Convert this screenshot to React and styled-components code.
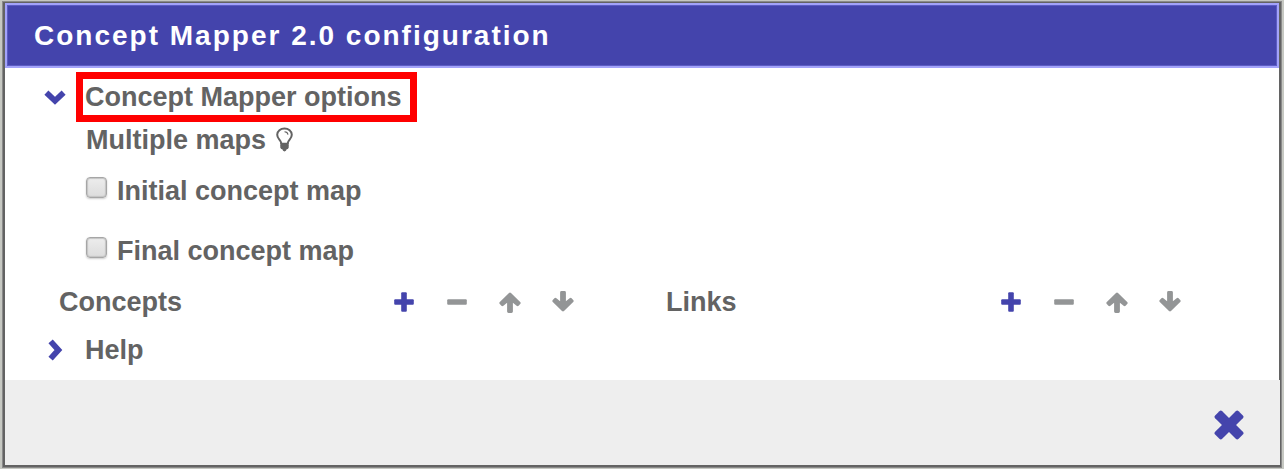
import React, { useState } from 'react';
import styled, { createGlobalStyle } from 'styled-components';

const GlobalStyle = createGlobalStyle`
  * {
    box-sizing: border-box;
  }
  body {
    margin: 0;
    padding: 1px 2px;
    background: #c6c8c2;
    color: #636363;
    font-family: "Liberation Sans", Arial, sans-serif;
    font-size: 27px;
    font-weight: bold;
    line-height: 36px;
  }
  button {
    display: flex;
    align-items: center;
    justify-content: center;
    padding: 0;
    border: none;
    background: none;
    color: inherit;
    font: inherit;
    cursor: pointer;
  }
  svg {
    display: block;
    flex: none;
  }
`;

const Frame = styled.main`
  border: 1px solid #8a8a8a;
`;

const Dialog = styled.section`
  border: 2px solid #636363;
  border-top-width: 1px;
  background: #fff;
`;

const TitleBar = styled.header`
  display: flex;
  align-items: center;
  height: 65px;
  padding: 0 27px;
  border: 2px solid #a3a3fa;
  background: #4444ac;
  box-shadow: inset 0 0 0 1px #5c5cc4;
  color: #fff;
`;

const Title = styled.h1`
  margin: 0;
  font-size: 28px;
  letter-spacing: 2px;
`;

const Content = styled.div`
  padding: 4px 0 3px;
`;

const SectionToggle = styled.button`
  height: ${props => props.$height};
`;

const Arrow = styled.span`
  display: flex;
  justify-content: center;
  width: 28px;
  margin: 0 7px 0 36px;
  color: #4444ac;
`;

const SectionName = styled.span`
  height: ${props => props.$marked ? '50px' : 'auto'};
  padding: 0 8px 0 2px;
  border: 7px solid ${props => props.$marked ? '#f00' : 'transparent'};
`;

const Options = styled.fieldset`
  margin: 0;
  padding: 0 0 0 81px;
  border: none;
`;

const OptionsLegend = styled.legend`
  display: flex;
  align-items: center;
  gap: 10px;
  height: 39px;
  padding: 0 0 4px;
`;

const OptionLabel = styled.label`
  display: flex;
  align-items: center;
  gap: 10px;
  width: fit-content;
  height: 60px;
`;

const Checkbox = styled.input`
  appearance: none;
  width: 21px;
  height: 21px;
  margin: 0 0 8px;
  border: 1px solid #a6a6a6;
  border-radius: 4px;
  background: linear-gradient(#ededed, #dcdcdc);
  box-shadow: 0 1px 2px rgba(0, 0, 0, 0.2), inset 0 0 1px 1px #c4c4c4;
  &:checked {
    background: #4444ac;
  }
`;

const Lists = styled.div`
  display: grid;
  grid-template-columns: 1fr 1fr;
  padding: 0 6px 0 54px;
`;

const ListHeader = styled.div`
  display: flex;
  align-items: center;
  justify-content: space-between;
  height: 42px;
  padding-right: 77px;
`;

const ListName = styled.h2`
  margin: 0;
  font-size: 27px;
`;

const Tools = styled.div`
  display: flex;
`;

const ToolButton = styled.button`
  width: 53px;
  height: 42px;
  color: ${props => props.$active ? '#4444ac' : '#939596'};
`;

const Footer = styled.footer`
  display: flex;
  justify-content: flex-end;
  align-items: center;
  position: relative;
  height: 85px;
  margin-right: -1px;
  padding: 5px 36px 0;
  background: #eee;
`;

const CloseButton = styled.button`
  width: 30px;
  height: 30px;
  color: #4444ac;
`;

const Icon = ({ width = 22, height = 22, children }) => (
  <svg width={width} height={height} viewBox={`0 0 ${width} ${height}`} fill="currentColor" aria-hidden="true">
    {children}
  </svg>
);

const ChevronDown = () => (
  <Icon width={22} height={15}>
    <path d="M2.4 2.6 11 10.8 19.6 2.6" fill="none" stroke="currentColor" strokeWidth="5.8" />
  </Icon>
);

const ChevronRight = () => (
  <Icon width={15} height={22}>
    <path d="M2.6 2.4 10.4 11 2.6 19.6" fill="none" stroke="currentColor" strokeWidth="5.8" />
  </Icon>
);

const Plus = () => (
  <Icon>
    <rect x="1.2" y="8.2" width="19.6" height="5.6" rx="1" />
    <rect x="8.2" y="1.2" width="5.6" height="19.6" rx="1" />
  </Icon>
);

const Minus = () => (
  <Icon>
    <rect x="1.2" y="8.2" width="19.6" height="5.6" rx="1" />
  </Icon>
);

const arrowPath = 'M10 .9Q11 0 12 .9L21.2 10.1Q22.2 11.1 21.2 12.1L19.6 13.7Q18.6 14.6 17.6 13.7L13.9 10.7V19.6Q13.9 21 12.5 21H9.5Q8.1 21 8.1 19.6V10.7L4.4 13.7Q3.4 14.6 2.4 13.7L.8 12.1Q-.2 11.1 .8 10.1Z';

const ArrowUp = () => (
  <Icon>
    <path d={arrowPath} transform="translate(0 1)" />
  </Icon>
);

const ArrowDown = () => (
  <Icon>
    <path d={arrowPath} transform="translate(0 21) scale(1 -1)" />
  </Icon>
);

const Bulb = () => (
  <Icon width={17} height={26}>
    <path
      d="M5.4 16.6C5 13 1.2 12 1.2 7.8 1.2 4 4.6 1.6 8.5 1.6S15.8 4 15.8 7.8C15.8 12 12 13 11.6 16.6"
      fill="none"
      stroke="currentColor"
      strokeWidth="2"
    />
    <path d="M8.5 4.8Q11.6 4.9 12 7.6" fill="none" stroke="currentColor" strokeWidth="1.1" />
    <path d="M4.4 15.8H12.6Q13.2 16.6 12.6 17.4 13.2 18.3 12.6 19.1 13.1 20.2 12.5 21 12 22.2 10.7 22.3 10.2 24.4 8.5 24.4T6.3 22.3Q5 22.2 4.5 21 3.9 20.2 4.4 19.1 3.8 18.3 4.4 17.4 3.8 16.6 4.4 15.8Z" />
  </Icon>
);

const Cross = () => (
  <Icon width={30} height={30}>
    <g transform="rotate(45 15 15)">
      <rect x="-1.6" y="10" width="33.2" height="10" rx="2" />
      <rect x="10" y="-1.6" width="10" height="33.2" rx="2" />
    </g>
  </Icon>
);

const ListPanel = ({ name }) => (
  <ListHeader>
    <ListName>{name}</ListName>
    <Tools>
      <ToolButton type="button" $active aria-label={`Add to ${name}`}><Plus /></ToolButton>
      <ToolButton type="button" aria-label={`Remove from ${name}`}><Minus /></ToolButton>
      <ToolButton type="button" aria-label={`Move up in ${name}`}><ArrowUp /></ToolButton>
      <ToolButton type="button" aria-label={`Move down in ${name}`}><ArrowDown /></ToolButton>
    </Tools>
  </ListHeader>
);

const App = () => {
  const [showOptions, setShowOptions] = useState(true);
  const [initialMap, setInitialMap] = useState(false);
  const [finalMap, setFinalMap] = useState(false);

  return (
    <>
      <GlobalStyle />
      <Frame>
        <Dialog>
          <TitleBar>
            <Title>Concept Mapper 2.0 configuration</Title>
          </TitleBar>
          <Content>
            <SectionToggle
              type="button"
              $height="50px"
              aria-expanded={showOptions}
              onClick={() => setShowOptions(!showOptions)}
            >
              <Arrow>{showOptions ? <ChevronDown /> : <ChevronRight />}</Arrow>
              <SectionName $marked>Concept Mapper options</SectionName>
            </SectionToggle>
            {showOptions && (
              <>
                <Options>
                  <OptionsLegend>Multiple maps <Bulb /></OptionsLegend>
                  <OptionLabel>
                    <Checkbox
                      type="checkbox"
                      checked={initialMap}
                      onChange={e => setInitialMap(e.target.checked)}
                    />
                    Initial concept map
                  </OptionLabel>
                  <OptionLabel>
                    <Checkbox
                      type="checkbox"
                      checked={finalMap}
                      onChange={e => setFinalMap(e.target.checked)}
                    />
                    Final concept map
                  </OptionLabel>
                </Options>
                <Lists>
                  <ListPanel name="Concepts" />
                  <ListPanel name="Links" />
                </Lists>
              </>
            )}
            <SectionToggle type="button" $height="54px" aria-expanded={false}>
              <Arrow><ChevronRight /></Arrow>
              <SectionName>Help</SectionName>
            </SectionToggle>
          </Content>
          <Footer>
            <CloseButton type="button" aria-label="Close"><Cross /></CloseButton>
          </Footer>
        </Dialog>
      </Frame>
    </>
  );
};

export default App;
